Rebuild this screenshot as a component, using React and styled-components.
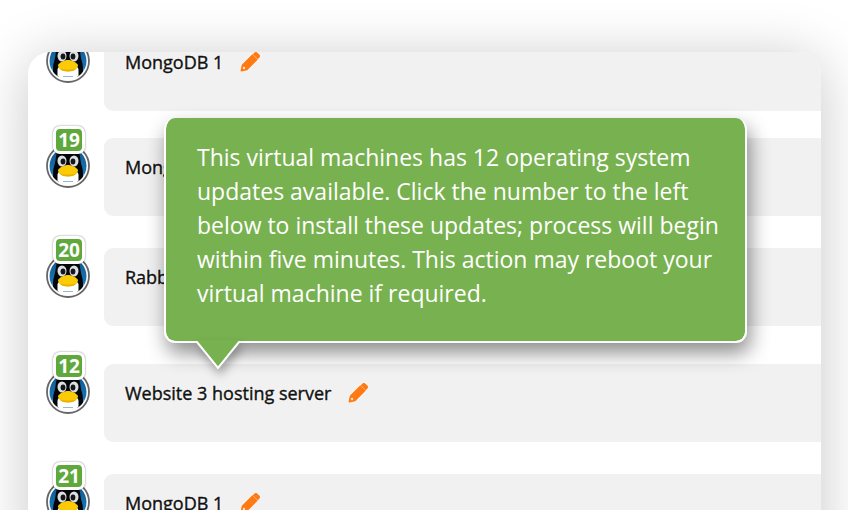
import React from 'react';
import styled, { createGlobalStyle } from 'styled-components';

const servers = [
  { id: 1, name: 'MongoDB 1', updates: 0, gap: 27 },
  { id: 2, name: 'MongoDB 2', updates: 19, gap: 32 },
  { id: 3, name: 'RabbitMQ', updates: 20, gap: 38 },
  { id: 4, name: 'Website 3 hosting server', updates: 12, gap: 32, open: true },
  { id: 5, name: 'MongoDB 1', updates: 21, gap: 32 },
];

const TuxIcon = () => (
  <svg width="44" height="44" viewBox="0 0 44 44" aria-hidden="true">
    <defs>
      <clipPath id="disc">
        <circle cx="22" cy="22" r="18.5" />
      </clipPath>
      <linearGradient id="sky" x1="0" y1="0" x2="0" y2="1">
        <stop offset="0" stopColor="#0d5286" />
        <stop offset="0.65" stopColor="#1b74b4" />
        <stop offset="0.9" stopColor="#ffffff" />
      </linearGradient>
    </defs>
    <circle cx="22" cy="22" r="21" fill="#fff" stroke="#666" strokeWidth="1.8" />
    <g clipPath="url(#disc)">
      <rect width="44" height="44" fill="url(#sky)" />
      <path
        d="M7 38V29c0-5 2-8 2.500-13C10.500 6 14 0 22 0s11.500 6 12.500 16c.5 5 2.500 8 2.500 13v9z"
        fill="#050608"
      />
      <path d="M11.500 44V31c0-3 3-5 10.500-5s10.500 2 10.500 5v13z" fill="#fff" />
      <ellipse cx="16" cy="17" rx="4.500" ry="5.500" fill="#dcdfe2" />
      <ellipse cx="28" cy="17" rx="4.500" ry="5.500" fill="#dcdfe2" />
      <ellipse cx="17" cy="17.500" rx="2.400" ry="3" fill="#15171a" />
      <ellipse cx="27" cy="17.500" rx="2.400" ry="3" fill="#15171a" />
      <path
        d="M12 26c1.500-2.500 6-5 10-5s8.500 2.500 10 5c0 3.500-4.500 6.500-10 6.500S12 29.500 12 26z"
        fill="#fccb05"
      />
      <path d="M13 29c5 2 13 2 18 0-1.500 2.500-5 3.500-9 3.500s-7.500-1-9-3.500z" fill="#eab000" />
      <path d="M17 37.500h10" stroke="#8fbbdb" strokeWidth="1.200" />
    </g>
  </svg>
);

const PencilIcon = () => (
  <svg width="20" height="20" viewBox="0 0 20 20" aria-hidden="true">
    <path
      fill="#ff7a12"
      d="M12.600 2.400l1.700-1.700a2.200 2.200 0 0 1 3.100 0l1.900 1.900a2.200 2.200 0 0 1 0 3.100l-1.700 1.700z"
    />
    <path
      fill="#ff7a12"
      d="M12.300 2.300l5.400 5.400L7.300 18.200l-5.500 1.200a1 1 0 0 1-1.200-1.200l1.200-5.500z"
    />
    <path d="M13 2.600l4.600 4.600" stroke="#ffa45a" strokeWidth="0.800" />
    <circle cx="4" cy="16" r="1.200" fill="#ffe2c4" />
  </svg>
);

const UpdateTooltip = () => (
  <Tooltip role="tooltip" id="update-tooltip">
    This virtual machines has 12 operating system updates available. Click the
    number to the left below to install these updates; process will begin within
    five minutes. This action may reboot your virtual machine if required.
    <Pointer width="44" height="30" viewBox="0 0 44 30" aria-hidden="true">
      <path d="M0 0h44v2L22 28 1 2z" fill="#78b150" />
      <path d="M0 2h1L22 28 43 2h1" fill="none" stroke="#fff" strokeWidth="2" />
    </Pointer>
  </Tooltip>
);

const ServerRow = ({ server }) => (
  <Row $gap={server.gap}>
    <Avatar>
      <TuxIcon />
      {server.updates > 0 && (
        <Badge
          type="button"
          aria-label={`${server.updates} updates for ${server.name}`}
          aria-describedby={server.open ? 'update-tooltip' : undefined}
        >
          {server.updates}
        </Badge>
      )}
    </Avatar>
    <Bar>
      <Name>{server.name}</Name>
      <EditButton type="button" aria-label={`Rename ${server.name}`}>
        <PencilIcon />
      </EditButton>
    </Bar>
    {server.open && <UpdateTooltip />}
  </Row>
);

const App = () => {
  return (
    <>
      <GlobalStyle />
      <Page>
        <Panel>
          <List>
            {servers.map((server) => (
              <ServerRow key={server.id} server={server} />
            ))}
          </List>
        </Panel>
      </Page>
    </>
  );
};

export default App;

const GlobalStyle = createGlobalStyle`
  * {
    box-sizing: border-box;
  }

  body {
    margin: 0;
    background: #fff;
    font-family: 'Open Sans', sans-serif;
  }
`;

const Page = styled.main`
  height: 100vh;
  overflow: hidden;
  padding: 52px 27px 0 28px;
`;

const Panel = styled.section`
  overflow: hidden;
  background: #fff;
  border-radius: 22px;
  box-shadow: 0 6px 56px rgba(0, 0, 0, 0.22);
`;

/* the list is scrolled a little, so the first row is cut by the panel */
const List = styled.ul`
  list-style: none;
  margin: -19px 0 0;
  padding: 0 0 0 18px;
`;

const Row = styled.li`
  position: relative;
  display: flex;
  align-items: flex-start;
  gap: 14px;
  margin-bottom: ${(props) => props.$gap}px;
`;

const Avatar = styled.div`
  position: relative;
  flex: none;
  width: 44px;
  padding-top: 6px;

  & > svg {
    display: block;
  }
`;

const Badge = styled.button`
  position: absolute;
  top: -12px;
  left: 7px;
  width: 32px;
  height: 28px;
  padding: 0;
  border: 3px solid #fff;
  border-radius: 7px;
  background: #5fa83c;
  box-shadow: 0 0 2px rgba(0, 0, 0, 0.5);
  color: #fff;
  font: 700 19px/22px 'Open Sans', sans-serif;
  text-align: center;
  cursor: pointer;
`;

const Bar = styled.div`
  flex: 1;
  min-width: 0;
  min-height: 78px;
  display: flex;
  align-items: flex-start;
  gap: 14px;
  padding: 16px 21px;
  background: #f1f1f1;
  border-radius: 9px 0 0 9px;
`;

const Name = styled.span`
  color: #111;
  font-size: 18px;
  line-height: 26px;
  white-space: nowrap;
  text-shadow: 0 0 2px #fff, 0 0 2px #fff;
  -webkit-text-stroke: 0.4px #111;
`;

const EditButton = styled.button`
  display: flex;
  padding: 3px;
  border: 0;
  background: none;
  cursor: pointer;

  & > svg {
    filter: drop-shadow(0 0 1px #fff);
  }
`;

const Tooltip = styled.div`
  position: absolute;
  z-index: 2;
  bottom: calc(100% + 21px);
  left: 118px;
  width: 583px;
  max-width: calc(100% - 74px);
  padding: 22px 24px 31px 31px;
  border: 2px solid #fff;
  border-top: 0;
  border-radius: 11px;
  background: #78b150;
  background-clip: padding-box;
  box-shadow: 3px 10px 20px rgba(0, 0, 0, 0.45);
  color: #fff;
  font-size: 23px;
  line-height: 34px;
`;

const Pointer = styled.svg`
  position: absolute;
  top: calc(100% - 1px);
  left: 30px;
  filter: drop-shadow(2px 6px 5px rgba(0, 0, 0, 0.3));
`;
